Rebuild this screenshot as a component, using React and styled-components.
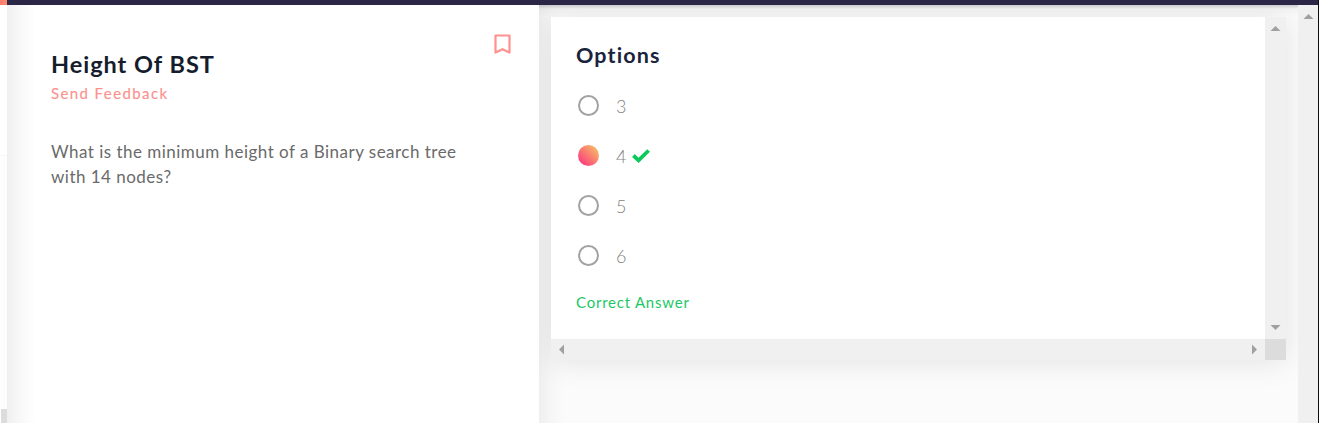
import React from 'react';
import styled, { createGlobalStyle } from 'styled-components';

const GlobalStyle = createGlobalStyle`
  * { box-sizing: border-box; }
  body { margin: 0; overflow: hidden; background: #fff; font-family: Lato, "Open Sans", sans-serif; }
`;

const Page = styled.div`
  display: grid;
  grid-template-columns: 7px minmax(0, 1fr);
  height: 100vh;
  border-right: 1px solid #0c0c0e;
`;

const Rail = styled.aside`
  display: flex;
  flex-direction: column;
`;
const RailAccent = styled.div`
  height: 5px;
  background: linear-gradient(90deg, #fd7b6b, #fb8a70);
`;
const RailTop = styled.div`
  height: 151px;
  border-bottom: 1px solid #f8f8f8;
`;
const RailBody = styled.div`
  flex: 1;
  background: #fdfdfd;
`;
const RailThumb = styled.div`
  height: 14px;
  margin-left: 1px;
  background: #dcdcdc;
`;

const Main = styled.div`
  display: flex;
  flex-direction: column;
  min-width: 0;
`;
const TopBar = styled.header`
  height: 5px;
  flex: none;
  background: #2c2646;
`;
const Columns = styled.div`
  flex: 1;
  min-height: 0;
  display: grid;
  grid-template-columns: 532px minmax(0, 1fr) 20px;
`;

const Problem = styled.section`
  padding: 44px 28px 0 44px;
  background: linear-gradient(90deg, #efefef 0, #f5f5f5 8px, #fbfbfb 18px, #fff 29px);
`;
const ProblemHead = styled.div`
  display: flex;
  justify-content: space-between;
  align-items: flex-start;
`;
const Title = styled.h1`
  margin: 0;
  color: #151d2d;
  font-size: 23.5px;
  line-height: 30px;
  font-weight: 700;
  letter-spacing: 0.97px;
`;
const Bookmark = styled.svg`
  width: 17px;
  height: 21px;
  margin-top: -15px;
  fill: none;
  stroke: #ff918f;
  stroke-width: 2.2;
`;
const Feedback = styled.div`
  margin-top: 4px;
  color: #fc918e;
  font-size: 15px;
  line-height: 20px;
  font-weight: 400;
  -webkit-text-stroke: 0.15px #fc918e;
  letter-spacing: 1.4px;
`;
const Question = styled.p`
  width: 430px;
  margin: 36px 0 0;
  color: #6a6a6a;
  font-size: 17px;
  line-height: 25px;
  letter-spacing: 0.48px;
`;

const Answers = styled.section`
  padding: 12px;
  overflow: hidden;
  background:
    linear-gradient(180deg, rgba(0, 0, 0, 0.18) 0, rgba(0, 0, 0, 0.03) 4px, transparent 12px),
    linear-gradient(90deg, rgba(0, 0, 0, 0.05) 0, rgba(0, 0, 0, 0.02) 12px, transparent 25px),
    #fbfbfb;
`;
const Card = styled.div`
  height: 343px;
  display: grid;
  grid-template: minmax(0, 1fr) 21px / minmax(0, 1fr) 21px;
  background: #fff;
  box-shadow: 0 2px 28px rgba(0, 0, 0, 0.1);
`;
const CardBody = styled.div`
  padding: 23px 25px 0;
`;
const Heading = styled.h2`
  margin: 0 0 17px;
  color: #1a233c;
  font-size: 21.5px;
  line-height: 30px;
  font-weight: 700;
  letter-spacing: 1.15px;
`;
const Choice = styled.label`
  height: 50px;
  padding: 8px 0 0 2px;
  display: flex;
  align-items: flex-start;
`;
const Radio = styled.span`
  width: 21px;
  height: 21px;
  margin-right: 17px;
  border-radius: 50%;
  border: ${(p) => (p.$on ? 'none' : '2px solid #a2a2a2')};
  background: ${(p) => (p.$on ? 'linear-gradient(45deg, #fc3b7c 12%, #f7bd67 90%)' : '#fff')};
`;
const ChoiceText = styled.span`
  width: 17px;
  color: #828282;
  font-size: 18px;
  line-height: 23px;
  font-weight: 300;
`;
const Tick = styled.svg`
  width: 18px;
  height: 14px;
  margin-top: 4px;
  margin-left: -1px;
  fill: none;
  stroke: #0dc95b;
  stroke-width: 3.8;
`;
const Verdict = styled.div`
  margin-top: 5px;
  color: #1bc866;
  font-size: 15px;
  line-height: 20px;
  letter-spacing: 0.77px;
`;

const Track = styled.div`
  display: flex;
  flex-direction: ${(p) => (p.$row ? 'row' : 'column')};
  align-items: center;
  justify-content: space-between;
  padding: ${(p) => (p.$row ? '0 8px' : '9px 0')};
  background: #f0f0f0;
`;
const Corner = styled.div`
  background: #dcdcdc;
`;
const Arrow = styled.svg`
  display: block;
  fill: #a0a0a0;
`;

const ARROWS = {
  up: [9, 5, 'M-0.5 5L4.5 0L9.5 5Z'],
  down: [9, 5, 'M-0.5 0H9.5L4.5 5Z'],
  left: [5, 9, 'M5 -0.5V9.5L0 4.5Z'],
  right: [5, 9, 'M0 -0.5V9.5L5 4.5Z'],
};

function ScrollArrow({ dir }) {
  const [w, h, d] = ARROWS[dir];
  return (
    <Arrow width={w} height={h} viewBox={`0 0 ${w} ${h}`} overflow="visible">
      <path d={d} />
    </Arrow>
  );
}

const choices = ['3', '4', '5', '6'];
const selected = '4';

export default function App() {
  return (
    <Page>
      <GlobalStyle />
      <Rail>
        <RailAccent />
        <RailTop />
        <RailBody />
        <RailThumb />
      </Rail>
      <Main>
        <TopBar />
        <Columns>
          <Problem>
            <ProblemHead>
              <Title>Height Of BST</Title>
              <Bookmark viewBox="0 0 17 21" strokeLinejoin="round">
                <path d="M1.5 1.5H15.5V18.6L8.5 15.2L1.5 18.6Z" />
              </Bookmark>
            </ProblemHead>
            <Feedback>Send Feedback</Feedback>
            <Question>What is the minimum height of a Binary search tree with 14 nodes?</Question>
          </Problem>
          <Answers>
            <Card>
              <CardBody>
                <Heading>Options</Heading>
                {choices.map((c) => (
                  <Choice key={c}>
                    <Radio $on={c === selected} />
                    <ChoiceText>{c}</ChoiceText>
                    {c === selected && (
                      <Tick viewBox="0 0 18 14">
                        <path d="M1.4 6.5L6.6 11.3L16.6 1.5" />
                      </Tick>
                    )}
                  </Choice>
                ))}
                <Verdict>Correct Answer</Verdict>
              </CardBody>
              <Track>
                <ScrollArrow dir="up" />
                <ScrollArrow dir="down" />
              </Track>
              <Track $row>
                <ScrollArrow dir="left" />
                <ScrollArrow dir="right" />
              </Track>
              <Corner />
            </Card>
          </Answers>
          <Track>
            <ScrollArrow dir="up" />
          </Track>
        </Columns>
      </Main>
    </Page>
  );
}
